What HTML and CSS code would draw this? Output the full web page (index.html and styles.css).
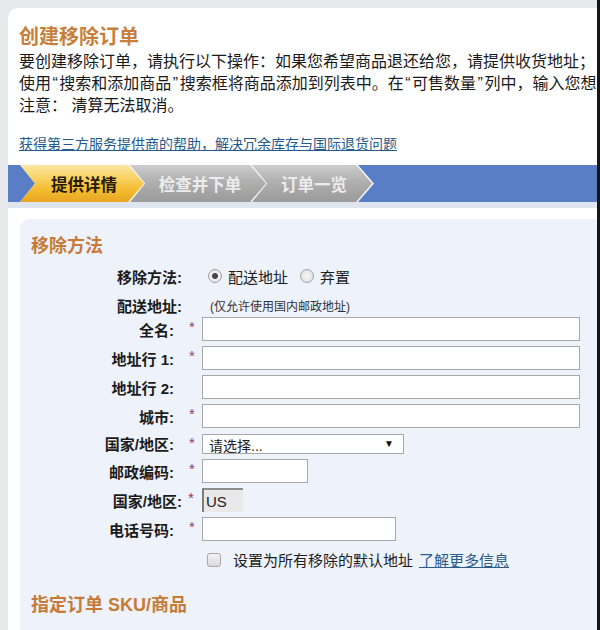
FILE: index.html
```html
<!DOCTYPE html>
<html lang="zh-CN">
<head>
<meta charset="utf-8">
<title>创建移除订单</title>
<link rel="stylesheet" href="styles.css">
</head>
<body>
<div class="card">
  <h1 class="title">创建移除订单</h1>
  <p class="intro">要创建移除订单，请执行以下操作：如果您希望商品退还给您，请提供收货地址；<br>使用<span class="q">“</span>搜索和添加商品<span class="q">”</span>搜索框将商品添加到列表中。在<span class="q">“</span>可售数量<span class="q">”</span>列中，输入您想<br>注意： 清算无法取消。</p>
  <a class="help" href="#">获得第三方服务提供商的帮助，解决冗余库存与国际退货问题</a>

  <div class="stepbar">
    <div class="step active"><span>提供详情</span></div>
    <div class="step"><span>检查并下单</span></div>
    <div class="step"><span>订单一览</span></div>
  </div>

  <div class="panel">
    <h2 class="section">移除方法</h2>
    <div class="form">
      <div class="row r-method">
        <span class="lbl wide">移除方法:</span><span class="req"></span>
        <span class="fld opts"><span class="radio on"></span><span class="opt">配送地址</span><span class="radio"></span><span class="opt">弃置</span></span>
      </div>
      <div class="row r-note">
        <span class="lbl wide">配送地址:</span><span class="req"></span>
        <span class="fld note">(仅允许使用国内邮政地址)</span>
      </div>
      <div class="row">
        <span class="lbl">全名:</span><span class="req">*</span>
        <span class="fld"><input class="box w-full" type="text"></span>
      </div>
      <div class="row">
        <span class="lbl">地址行 1:</span><span class="req">*</span>
        <span class="fld"><input class="box w-full" type="text"></span>
      </div>
      <div class="row">
        <span class="lbl">地址行 2:</span><span class="req"></span>
        <span class="fld"><input class="box w-full" type="text"></span>
      </div>
      <div class="row">
        <span class="lbl">城市:</span><span class="req">*</span>
        <span class="fld"><input class="box w-full" type="text"></span>
      </div>
      <div class="row r-select">
        <span class="lbl">国家/地区:</span><span class="req">*</span>
        <span class="fld"><span class="select"><span class="sel-text">请选择...</span><span class="sel-arrow">▼</span></span></span>
      </div>
      <div class="row">
        <span class="lbl">邮政编码:</span><span class="req">*</span>
        <span class="fld"><input class="box w-zip" type="text"></span>
      </div>
      <div class="row">
        <span class="lbl tight">国家/地区:</span><span class="req near">*</span>
        <span class="fld"><span class="country">US</span></span>
      </div>
      <div class="row r-phone">
        <span class="lbl">电话号码:</span><span class="req">*</span>
        <span class="fld"><input class="box w-phone" type="text"></span>
      </div>
      <div class="row r-check">
        <span class="lbl"></span><span class="req"></span>
        <span class="fld check"><span class="checkbox"></span><span class="check-text">设置为所有移除的默认地址</span><a class="more" href="#">了解更多信息</a></span>
      </div>
    </div>
    <h2 class="section">指定订单 SKU/商品</h2>
  </div>
</div>
</body>
</html>
```
FILE: styles.css
```css
html {
  height: 100%;
  border-right: 3px solid #161616;
  overflow: hidden;
}

body {
  margin: 0;
  height: 100%;
  background: #e8e9eb;
  font-family: "Liberation Sans", "Noto Sans CJK SC", sans-serif;
  color: #1c1c1c;
  overflow: hidden;
}

.card {
  margin: 8px 0 0 8px;
  background: #ffffff;
  border-radius: 10px 0 0 0;
  padding: 17px 0 0 11px;
  overflow: hidden;
}

.title {
  margin: 0;
  font-size: 20px;
  line-height: 24px;
  font-weight: bold;
  color: #c77f3b;
}

.intro {
  margin: 2px 0 0;
  font-size: 16px;
  line-height: 22px;
  white-space: nowrap;
  color: #1a1a1a;
}

.q {
  padding: 0 1.5px;
}

.help {
  display: inline-block;
  margin-top: 18px;
  font-size: 14px;
  line-height: 18px;
  color: #245b8c;
  text-decoration: underline;
}

.stepbar {
  display: flex;
  margin: 12px 0 0 -11px;
  padding-left: 12px;
  height: 37px;
  background: #5a7ec6;
  border-bottom: 6px solid #dfe6f0;
}

.step {
  height: 37px;
  background: #f4f4f4;
  display: flex;
  clip-path: polygon(0 0, calc(100% - 16px) 0, 100% 50%, calc(100% - 16px) 100%, 0 100%, 15px 50%);
}

.step:nth-child(1) { width: 126px; }
.step:nth-child(2) { width: 138px; margin-left: -16px; }
.step:nth-child(3) { width: 122px; margin-left: -16px; }

.step > span {
  flex: 1;
  display: flex;
  align-items: center;
  justify-content: center;
  font-size: 16.5px;
  font-weight: bold;
  color: #ececec;
  background: linear-gradient(#cdcdcd 0%, #b2b2b2 40%, #a3a3a3 75%, #9b9b9b 100%);
  clip-path: polygon(0 0, calc(100% - 18px) 0, calc(100% - 2px) 50%, calc(100% - 18px) 100%, 0 100%, 15px 50%);
  padding-left: 2px;
}

.step.active > span {
  color: #2a1b06;
  background: linear-gradient(#fbe7a4 0%, #f8d262 35%, #f3ba2c 70%, #e7a424 100%);
}

.panel {
  margin: 11px 0 0 1px;
  background: #eef2fb;
  border-radius: 9px 0 0 0;
  padding: 16px 0 14px 11px;
}

.section {
  margin: 0;
  font-size: 18px;
  line-height: 22px;
  font-weight: bold;
  color: #c77a36;
}

.form {
  margin-top: 8px;
  margin-bottom: 28px;
}

.row {
  display: grid;
  grid-template-columns: 151px 20px 1fr;
  align-items: center;
  height: 24px;
  margin-bottom: 5px;
}

.lbl {
  text-align: right;
  padding-right: 8px;
  font-size: 15px;
  font-weight: bold;
  color: #1b1b1b;
  white-space: nowrap;
}

.lbl.wide { padding-right: 0; }
.lbl.tight { padding-right: 0; }

.req {
  align-self: start;
  padding-top: 2px;
  text-align: center;
  font-size: 15px;
  line-height: 16px;
  color: #8e3d5e;
}

.req.near { text-align: left; padding-left: 6px; }

.fld {
  display: flex;
  align-items: center;
}

.r-method { height: 22px; margin-bottom: 8px; }
.r-note { height: 21px; margin-bottom: 1px; }
.r-select { height: 21px; }
.r-phone { margin-bottom: 8px; }
.r-check { height: 17px; margin-bottom: 0; }

.opts { padding-left: 6px; }

.radio {
  width: 14px;
  height: 14px;
  box-sizing: border-box;
  border-radius: 50%;
  border: 1px solid #a3a3a3;
  background: radial-gradient(circle, #f6f6f6 0, #dcdcdc 100%);
}

.radio.on {
  background: radial-gradient(circle, #474747 0, #474747 2.6px, #f3f3f3 3.4px, #d8d8d8 100%);
}

.opt {
  font-size: 15px;
  margin: 0 12px 0 6px;
  color: #1c1c1c;
}

.note {
  padding-left: 8px;
  font-size: 12px;
  color: #333333;
}

.box {
  display: block;
  box-sizing: border-box;
  height: 24px;
  margin: 0;
  padding: 0 3px;
  border: 1px solid #a8a8a8;
  border-radius: 0;
  background: #ffffff;
  outline: none;
}

.w-full { width: 378px; }
.w-zip { width: 106px; }
.w-phone { width: 194px; }

.select {
  box-sizing: border-box;
  width: 202px;
  height: 20px;
  display: flex;
  align-items: center;
  justify-content: space-between;
  padding: 0 9px 0 6px;
  border: 1px solid #a8a8a8;
  background: #ffffff;
}

.sel-text {
  font-size: 14px;
  color: #1c1c1c;
  padding-top: 2px;
}

.sel-arrow {
  font-size: 10px;
  color: #111111;
}

.country {
  box-sizing: border-box;
  width: 41px;
  height: 24px;
  display: flex;
  align-items: center;
  padding-left: 2px;
  font-size: 15px;
  color: #222222;
  background: #e9e9e9;
  border-top: 2px solid #8d8d8d;
  border-left: 2px solid #7d7d7d;
}

.check { padding-left: 5px; }

.checkbox {
  width: 14px;
  height: 14px;
  box-sizing: border-box;
  border: 1px solid #a9a9a9;
  border-radius: 3px;
  background: linear-gradient(#f5f5f5, #d9d9d9);
}

.check-text {
  margin-left: 12px;
  font-size: 15px;
  color: #1c1c1c;
  white-space: nowrap;
}

.more {
  margin-left: 6px;
  font-size: 15px;
  color: #2a5c8a;
  text-decoration: underline;
  white-space: nowrap;
}
```
